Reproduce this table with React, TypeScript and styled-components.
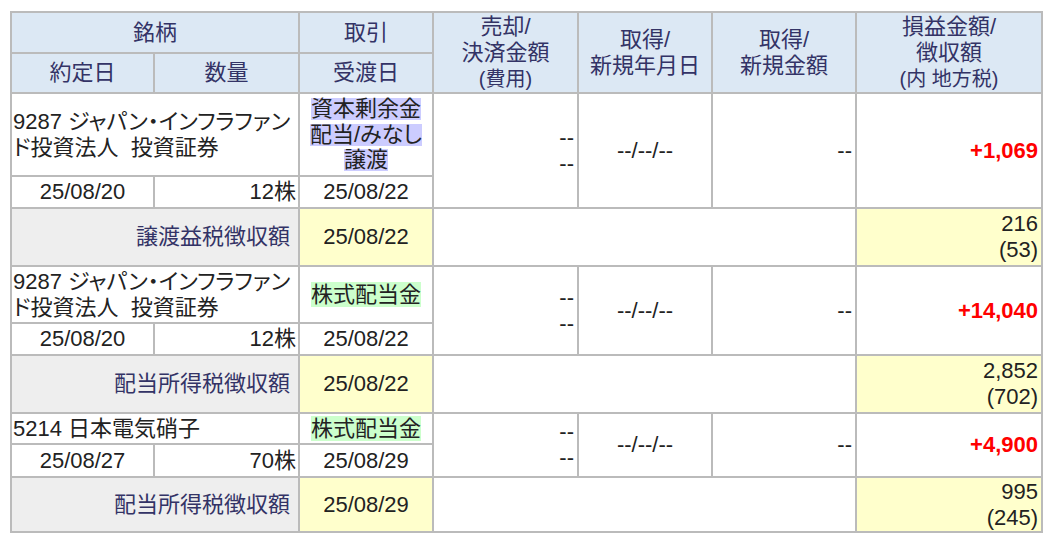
import React from 'react';
import styled, { createGlobalStyle } from 'styled-components';

const GlobalStyle = createGlobalStyle`
  body {
    margin: 0;
    background: #fff;
  }
`;

const Page = styled.div`
  padding: 11px 0 0 10px;
`;

const Table = styled.table`
  width: 1031px;
  table-layout: fixed;
  border-collapse: collapse;
  font-family: 'Liberation Sans', 'Noto Sans CJK JP', sans-serif;
  font-size: 22px;
  color: #222;
  border: 2px solid #bbb;
`;

const Row = styled.tr<{ $h: number }>`
  height: ${({ $h }) => $h}px;
`;

const Head = styled.th`
  background: #dce8f4;
  color: #333366;
  font-weight: normal;
  line-height: 26px;
  padding: 0;
  border: 2px solid #bbb;
  text-align: center;
  vertical-align: middle;
  white-space: nowrap;
`;

const Note = styled.span`
  font-size: 20px;
`;

type Tone = 'plain' | 'yellow' | 'gray';
const tones: Record<Tone, string> = {
  plain: '#fff',
  yellow: '#ffffcc',
  gray: '#eeeeee',
};

const Cell = styled.td<{ $align?: 'left' | 'center' | 'right'; $tone?: Tone }>`
  border: 2px solid #bbb;
  padding: 0 3px;
  line-height: 26px;
  text-align: ${({ $align }) => $align ?? 'center'};
  background: ${({ $tone }) => tones[$tone ?? 'plain']};
  vertical-align: middle;
  font-feature-settings: 'palt';
  white-space: nowrap;
`;

const NameCell = styled(Cell)`
  padding-left: 1px;
`;

const QtyCell = styled(Cell)`
  padding-right: 2px;
`;

const TaxLabel = styled(Cell)`
  color: #333366;
  padding-right: 8px;
`;

const Gain = styled.span`
  color: #ff0000;
  font-weight: bold;
`;

const TradeStack = styled.div`
  display: flex;
  flex-direction: column;
  align-items: center;
  gap: 3.5px;
`;

const Highlight = styled.span<{ $kind: 'capital' | 'dividend'; $tight?: boolean }>`
  display: inline-block;
  line-height: ${({ $tight }) => ($tight ? 22 : 25)}px;
  background: ${({ $kind }) => ($kind === 'capital' ? '#ccccff' : '#ccffcc')};
`;

type Trade = {
  name: string[];
  trade: string[];
  kind: 'capital' | 'dividend';
  tradeDate: string;
  qty: string;
  settle: string;
  gain: string;
  heights: [number, number, number];
  tax: { label: string; date: string; amount: string; local: string };
};

const records: Trade[] = [
  {
    name: ['9287 ジャパン・インフラファン', 'ド投資法人\u00a0\u00a0投資証券'],
    trade: ['資本剰余金', '配当/みなし', '譲渡'],
    kind: 'capital',
    tradeDate: '25/08/20',
    qty: '12株',
    settle: '25/08/22',
    gain: '+1,069',
    heights: [83, 32, 58],
    tax: { label: '譲渡益税徴収額', date: '25/08/22', amount: '216', local: '(53)' },
  },
  {
    name: ['9287 ジャパン・インフラファン', 'ド投資法人\u00a0\u00a0投資証券'],
    trade: ['株式配当金'],
    kind: 'dividend',
    tradeDate: '25/08/20',
    qty: '12株',
    settle: '25/08/22',
    gain: '+14,040',
    heights: [57, 32, 58],
    tax: { label: '配当所得税徴収額', date: '25/08/22', amount: '2,852', local: '(702)' },
  },
  {
    name: ['5214 日本電気硝子'],
    trade: ['株式配当金'],
    kind: 'dividend',
    tradeDate: '25/08/27',
    qty: '70株',
    settle: '25/08/29',
    gain: '+4,900',
    heights: [31, 33, 55],
    tax: { label: '配当所得税徴収額', date: '25/08/29', amount: '995', local: '(245)' },
  },
];

const Lines = ({ items }: { items: string[] }) => (
  <>
    {items.map((t, i) => (
      <React.Fragment key={i}>
        {i > 0 && <br />}
        {t}
      </React.Fragment>
    ))}
  </>
);

const App = () => {
  return (
    <Page>
      <GlobalStyle />
      <Table>
        <colgroup>
          <col style={{ width: 143 }} />
          <col style={{ width: 145 }} />
          <col style={{ width: 134 }} />
          <col style={{ width: 145 }} />
          <col style={{ width: 134 }} />
          <col style={{ width: 144 }} />
          <col style={{ width: 186 }} />
        </colgroup>
        <thead>
          <Row $h={41}>
            <Head colSpan={2}>銘柄</Head>
            <Head>取引</Head>
            <Head rowSpan={2}>
              売却/
              <br />
              決済金額
              <br />
              <Note>(費用)</Note>
            </Head>
            <Head rowSpan={2}>
              取得/
              <br />
              新規年月日
            </Head>
            <Head rowSpan={2}>
              取得/
              <br />
              新規金額
            </Head>
            <Head rowSpan={2}>
              損益金額/
              <br />
              徴収額
              <br />
              <Note>(内 地方税)</Note>
            </Head>
          </Row>
          <Row $h={40}>
            <Head>約定日</Head>
            <Head>数量</Head>
            <Head>受渡日</Head>
          </Row>
        </thead>
        <tbody>
          {records.map((r, i) => (
            <React.Fragment key={i}>
              <Row $h={r.heights[0]}>
                <NameCell colSpan={2} $align="left">
                  <Lines items={r.name} />
                </NameCell>
                <Cell>
                  <TradeStack>
                    {r.trade.map((t) => (
                      <Highlight key={t} $kind={r.kind} $tight={r.trade.length > 1}>
                        {t}
                      </Highlight>
                    ))}
                  </TradeStack>
                </Cell>
                <Cell rowSpan={2} $align="right">
                  --
                  <br />
                  --
                </Cell>
                <Cell rowSpan={2}>--/--/--</Cell>
                <Cell rowSpan={2} $align="right">
                  --
                </Cell>
                <Cell rowSpan={2} $align="right">
                  <Gain>{r.gain}</Gain>
                </Cell>
              </Row>
              <Row $h={r.heights[1]}>
                <Cell>{r.tradeDate}</Cell>
                <QtyCell $align="right">{r.qty}</QtyCell>
                <Cell>{r.settle}</Cell>
              </Row>
              <Row $h={r.heights[2]}>
                <TaxLabel colSpan={2} $align="right" $tone="gray">
                  {r.tax.label}
                </TaxLabel>
                <Cell $tone="yellow">{r.tax.date}</Cell>
                <Cell colSpan={3} />
                <Cell $align="right" $tone="yellow">
                  {r.tax.amount}
                  <br />
                  {r.tax.local}
                </Cell>
              </Row>
            </React.Fragment>
          ))}
        </tbody>
      </Table>
    </Page>
  );
};

export default App;
